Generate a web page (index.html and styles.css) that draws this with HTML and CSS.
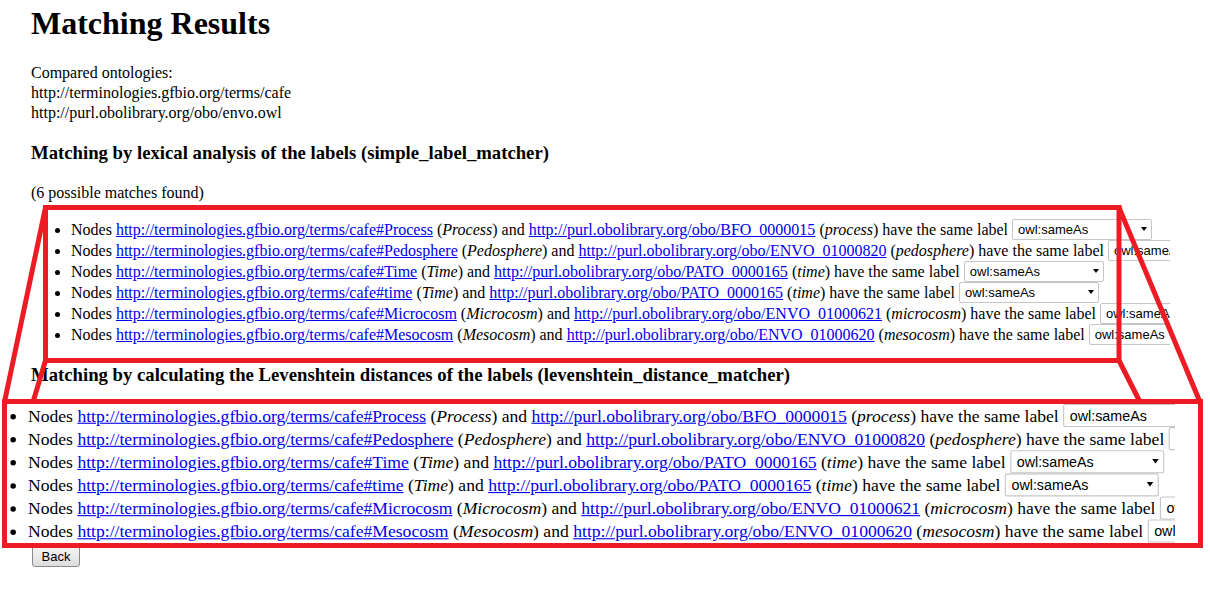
FILE: index.html
```html
<!DOCTYPE html>
<html lang="en">
<head>
<meta charset="utf-8">
<title>Matching Results</title>
<link rel="stylesheet" href="styles.css">
</head>
<body>
<div class="page">
  <h1>Matching Results</h1>
  <p class="ontologies">Compared ontologies:<br>http://terminologies.gfbio.org/terms/cafe<br>http://purl.obolibrary.org/obo/envo.owl</p>

  <h3>Matching by lexical analysis of the labels (simple_label_matcher)</h3>
  <p class="count">(6 possible matches found)</p>
  <ul class="matches">
    <li>Nodes <a href="#">http://terminologies.gfbio.org/terms/cafe#Process</a> (<i>Process</i>) and <a href="#">http://purl.obolibrary.org/obo/BFO_0000015</a> (<i>process</i>) have the same label <span class="sel"><select><option>owl:sameAs</option></select></span></li>
    <li>Nodes <a href="#">http://terminologies.gfbio.org/terms/cafe#Pedosphere</a> (<i>Pedosphere</i>) and <a href="#">http://purl.obolibrary.org/obo/ENVO_01000820</a> (<i>pedosphere</i>) have the same label <span class="sel"><select><option>owl:sameAs</option></select></span></li>
    <li>Nodes <a href="#">http://terminologies.gfbio.org/terms/cafe#Time</a> (<i>Time</i>) and <a href="#">http://purl.obolibrary.org/obo/PATO_0000165</a> (<i>time</i>) have the same label <span class="sel"><select><option>owl:sameAs</option></select></span></li>
    <li>Nodes <a href="#">http://terminologies.gfbio.org/terms/cafe#time</a> (<i>Time</i>) and <a href="#">http://purl.obolibrary.org/obo/PATO_0000165</a> (<i>time</i>) have the same label <span class="sel"><select><option>owl:sameAs</option></select></span></li>
    <li>Nodes <a href="#">http://terminologies.gfbio.org/terms/cafe#Microcosm</a> (<i>Microcosm</i>) and <a href="#">http://purl.obolibrary.org/obo/ENVO_01000621</a> (<i>microcosm</i>) have the same label <span class="sel"><select><option>owl:sameAs</option></select></span></li>
    <li>Nodes <a href="#">http://terminologies.gfbio.org/terms/cafe#Mesocosm</a> (<i>Mesocosm</i>) and <a href="#">http://purl.obolibrary.org/obo/ENVO_01000620</a> (<i>mesocosm</i>) have the same label <span class="sel"><select><option>owl:sameAs</option></select></span></li>
  </ul>

  <h3>Matching by calculating the Levenshtein distances of the labels (levenshtein_distance_matcher)</h3>
  <ul class="matches occluded">
    <li>Nodes <a href="#">http://terminologies.gfbio.org/terms/cafe#Process</a> (<i>Process</i>) and <a href="#">http://purl.obolibrary.org/obo/BFO_0000015</a> (<i>process</i>) have the same label <span class="sel"><select><option>owl:sameAs</option></select></span></li>
    <li>Nodes <a href="#">http://terminologies.gfbio.org/terms/cafe#Pedosphere</a> (<i>Pedosphere</i>) and <a href="#">http://purl.obolibrary.org/obo/ENVO_01000820</a> (<i>pedosphere</i>) have the same label <span class="sel"><select><option>owl:sameAs</option></select></span></li>
    <li>Nodes <a href="#">http://terminologies.gfbio.org/terms/cafe#Time</a> (<i>Time</i>) and <a href="#">http://purl.obolibrary.org/obo/PATO_0000165</a> (<i>time</i>) have the same label <span class="sel"><select><option>owl:sameAs</option></select></span></li>
    <li>Nodes <a href="#">http://terminologies.gfbio.org/terms/cafe#time</a> (<i>Time</i>) and <a href="#">http://purl.obolibrary.org/obo/PATO_0000165</a> (<i>time</i>) have the same label <span class="sel"><select><option>owl:sameAs</option></select></span></li>
    <li>Nodes <a href="#">http://terminologies.gfbio.org/terms/cafe#Microcosm</a> (<i>Microcosm</i>) and <a href="#">http://purl.obolibrary.org/obo/ENVO_01000621</a> (<i>microcosm</i>) have the same label <span class="sel"><select><option>owl:sameAs</option></select></span></li>
    <li>Nodes <a href="#">http://terminologies.gfbio.org/terms/cafe#Mesocosm</a> (<i>Mesocosm</i>) and <a href="#">http://purl.obolibrary.org/obo/ENVO_01000620</a> (<i>mesocosm</i>) have the same label <span class="sel"><select><option>owl:sameAs</option></select></span></li>
  </ul>
  <button class="back" type="button">Back</button>
</div>

<div class="annotation">
  <svg class="callout" width="1210" height="591" viewBox="0 0 1210 591">
    <rect x="45.5" y="207.5" width="1073.5" height="153" fill="none" stroke="#ed1c24" stroke-width="5"/>
    <line x1="45.5" y1="207.5" x2="4.5" y2="402" stroke="#ed1c24" stroke-width="5"/>
    <line x1="45.5" y1="360.5" x2="33" y2="402" stroke="#ed1c24" stroke-width="5"/>
    <line x1="1119" y1="207.5" x2="1200" y2="402" stroke="#ed1c24" stroke-width="5"/>
    <line x1="1119" y1="360.5" x2="1140" y2="402" stroke="#ed1c24" stroke-width="5"/>
  </svg>
  <div class="zoom">
    <div class="zoom-clip">
      <div class="zoom-content">
        <ul class="matches">
          <li>Nodes <a href="#">http://terminologies.gfbio.org/terms/cafe#Process</a> (<i>Process</i>) and <a href="#">http://purl.obolibrary.org/obo/BFO_0000015</a> (<i>process</i>) have the same label <span class="sel"><select><option>owl:sameAs</option></select></span></li>
          <li>Nodes <a href="#">http://terminologies.gfbio.org/terms/cafe#Pedosphere</a> (<i>Pedosphere</i>) and <a href="#">http://purl.obolibrary.org/obo/ENVO_01000820</a> (<i>pedosphere</i>) have the same label <span class="sel"><select><option>owl:sameAs</option></select></span></li>
          <li>Nodes <a href="#">http://terminologies.gfbio.org/terms/cafe#Time</a> (<i>Time</i>) and <a href="#">http://purl.obolibrary.org/obo/PATO_0000165</a> (<i>time</i>) have the same label <span class="sel"><select><option>owl:sameAs</option></select></span></li>
          <li>Nodes <a href="#">http://terminologies.gfbio.org/terms/cafe#time</a> (<i>Time</i>) and <a href="#">http://purl.obolibrary.org/obo/PATO_0000165</a> (<i>time</i>) have the same label <span class="sel"><select><option>owl:sameAs</option></select></span></li>
          <li>Nodes <a href="#">http://terminologies.gfbio.org/terms/cafe#Microcosm</a> (<i>Microcosm</i>) and <a href="#">http://purl.obolibrary.org/obo/ENVO_01000621</a> (<i>microcosm</i>) have the same label <span class="sel"><select><option>owl:sameAs</option></select></span></li>
          <li>Nodes <a href="#">http://terminologies.gfbio.org/terms/cafe#Mesocosm</a> (<i>Mesocosm</i>) and <a href="#">http://purl.obolibrary.org/obo/ENVO_01000620</a> (<i>mesocosm</i>) have the same label <span class="sel"><select><option>owl:sameAs</option></select></span></li>
        </ul>
      </div>
    </div>
  </div>
</div>
</body>
</html>
```
FILE: styles.css
```css
html, body {
  margin: 0;
  padding: 0;
  background: #fff;
}

body {
  font-family: "Liberation Serif", "Times New Roman", serif;
  font-size: 16px;
  color: #000;
  overflow: hidden;
}

.page {
  width: 1170px;
  padding-left: 31px;
  box-sizing: border-box;
  overflow: hidden;
  display: flow-root;
}

h1 {
  font-size: 32px;
  line-height: 37px;
  font-weight: bold;
  margin: 5px 0 21px;
}

.ontologies,
.count {
  line-height: 20px;
  margin: 0 0 16px;
}

h3 {
  font-size: 18.72px;
  line-height: 22px;
  font-weight: bold;
  margin: 19px 0;
}

.matches {
  margin: 16px 0;
  padding-left: 40px;
  white-space: nowrap;
}

/* list lying fully under the magnified callout */
.occluded {
  visibility: hidden;
}

.matches li {
  height: 21px;
  line-height: 21px;
}

.matches a {
  color: #0000ee;
  text-decoration: underline;
}

.sel {
  position: relative;
  display: inline-block;
  vertical-align: top;
  margin-top: -1px;
}

.sel select {
  appearance: none;
  -webkit-appearance: none;
  width: 140px;
  height: 21px;
  margin: 0;
  padding: 0 18px 0 5px;
  border: 1px solid #c6c6c6;
  border-radius: 2px;
  background: #fff;
  font-family: "Liberation Sans", Arial, sans-serif;
  font-size: 13px;
  color: #000;
  box-sizing: border-box;
}

.sel::after {
  content: "";
  position: absolute;
  right: 5px;
  top: 9px;
  border-left: 3.5px solid transparent;
  border-right: 3.5px solid transparent;
  border-top: 4px solid #000;
}

.back {
  display: block;
  height: 23px;
  width: 48px;
  margin: -3px 0 0 1px;
  padding: 3px 0 0;
  border: 1px solid #8a8a8a;
  border-radius: 3px;
  background: linear-gradient(#f6f6f6, #dedede);
  font-family: "Liberation Sans", Arial, sans-serif;
  font-size: 13px;
  line-height: 16px;
  color: #000;
  box-sizing: border-box;
}

/* annotation overlay */
.annotation {
  position: absolute;
  left: 0;
  top: 0;
  width: 1210px;
  height: 591px;
  pointer-events: none;
}

.callout {
  position: absolute;
  left: 0;
  top: 0;
}

.zoom {
  position: absolute;
  left: 2px;
  top: 399px;
  width: 1201px;
  height: 149px;
  box-sizing: border-box;
  border: 5px solid #ed1c24;
  background: #fff;
}

.zoom-clip {
  width: 1168px;
  height: 100%;
  overflow: hidden;
}

.zoom-content {
  width: max-content;
  transform: translate(-23px, 0) scale(1.1);
  transform-origin: 0 0;
}

.zoom-content .matches {
  margin: 0;
}
```
